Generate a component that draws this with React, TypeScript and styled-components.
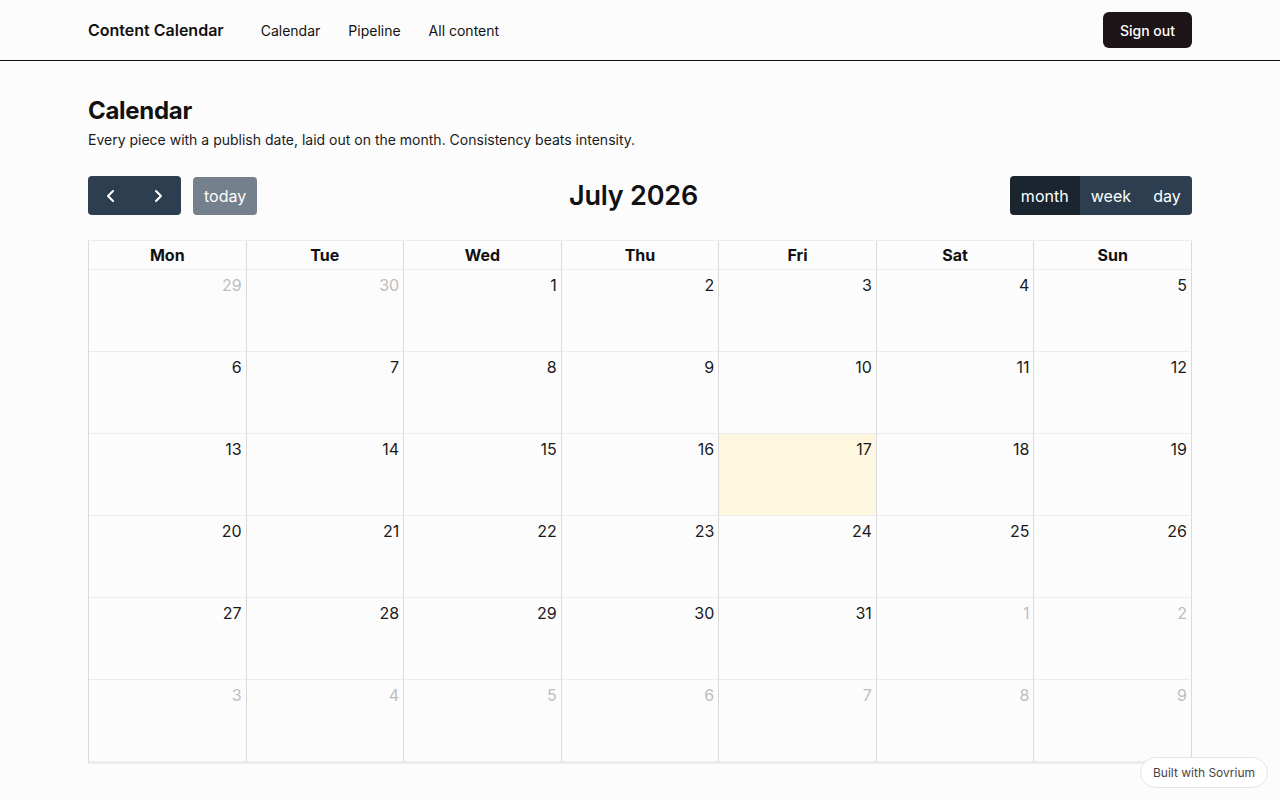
import styled, { createGlobalStyle } from "styled-components";

const GlobalStyle = createGlobalStyle`
  * { box-sizing: border-box; }
  body {
    margin: 0;
    background: #fdfcfd;
    color: #111;
    font-family: Inter, "Noto Sans", sans-serif;
  }
`;

const Header = styled.header`
  height: 61px;
  border-bottom: 1px solid #111;
`;

const HeaderInner = styled.div`
  max-width: 1104px;
  height: 100%;
  margin: 0 auto;
  display: flex;
  align-items: center;
`;

const Brand = styled.div`
  font-size: 16px;
  font-weight: 600;
  margin-right: 37px;
`;

const Nav = styled.nav`
  display: flex;
  gap: 28px;
  flex: 1;
`;

const NavLink = styled.a`
  font-size: 14px;
  font-weight: 420;
  color: #111;
  text-decoration: none;
`;

const SignOut = styled.button`
  height: 36px;
  width: 89px;
  border: none;
  border-radius: 6px;
  background: #1c1416;
  color: #fff;
  font-family: inherit;
  font-size: 14px;
  font-weight: 450;
`;

const Main = styled.main`
  max-width: 1104px;
  margin: 0 auto;
  padding-top: 35px;
`;

const Title = styled.h1`
  margin: 0;
  font-size: 24px;
  font-weight: 700;
  letter-spacing: -0.3px;
  line-height: 30px;
`;

const Lead = styled.p`
  margin: 4px 0 0;
  font-size: 14px;
  line-height: 20px;
  color: #1a1a1a;
`;

const Toolbar = styled.div`
  margin-top: 26px;
  display: flex;
  align-items: center;
  justify-content: space-between;
  height: 39px;
`;

const ToolGroup = styled.div`
  display: flex;
  align-items: center;
  gap: 12px;
`;

const ButtonGroup = styled.div`
  display: flex;
  border-radius: 4px;
  overflow: hidden;
`;

const FcButton = styled.button<{ $active?: boolean; $faded?: boolean; $w?: number }>`
  height: 39px;
  min-width: ${(p) => (p.$w ? `${p.$w}px` : "auto")};
  padding: 0 11px;
  border: none;
  background: ${(p) => (p.$active ? "#1a252f" : "#2c3e50")};
  opacity: ${(p) => (p.$faded ? 0.65 : 1)};
  color: #fff;
  font-family: inherit;
  font-size: 16px;
  display: flex;
  align-items: center;
  justify-content: center;
`;

const TodayButton = styled(FcButton)`
  border-radius: 4px;
  height: 38px;
`;

const MonthTitle = styled.h2`
  margin: 0;
  font-size: 27px;
  font-weight: 600;
  letter-spacing: -0.2px;
`;

const Grid = styled.div`
  margin-top: 25px;
  display: grid;
  grid-template-columns: repeat(7, 1fr);
  border-top: 1px solid #ececec;
  border-left: 1px solid #dadada;
  border-bottom: 2px solid #ececec;
`;

const DayHead = styled.div`
  height: 29px;
  padding-bottom: 1px;
  border-right: 1px solid #dadada;
  border-bottom: 1px solid #ececec;
  display: flex;
  align-items: center;
  justify-content: center;
  font-size: 16px;
  font-weight: 700;
`;

const Cell = styled.div<{ $today?: boolean }>`
  height: 82px;
  border-right: 1px solid #dadada;
  border-bottom: 1px solid #ececec;
  background: ${(p) => (p.$today ? "#fef7e0" : "transparent")};
  padding: 4px 4px 0 0;
  text-align: right;
`;

const DayNum = styled.span<{ $other?: boolean }>`
  font-size: 16px;
  line-height: 22px;
  color: ${(p) => (p.$other ? "#bdbdbd" : "#1a1a1a")};
`;

const Badge = styled.div`
  position: fixed;
  right: 12px;
  bottom: 12px;
  height: 31px;
  padding: 0 12px;
  border: 1px solid #e8e2e3;
  border-radius: 16px;
  background: #fff;
  color: #4a4446;
  font-size: 12px;
  display: flex;
  align-items: center;
`;

const Chevron = ({ dir }: { dir: "left" | "right" }) => (
  <svg width="16" height="16" viewBox="0 0 16 16" fill="none">
    <path
      d={dir === "left" ? "M10 3 L5 8 L10 13" : "M6 3 L11 8 L6 13"}
      stroke="#fff"
      strokeWidth="2"
      strokeLinecap="round"
      strokeLinejoin="round"
    />
  </svg>
);

const WEEKDAYS = ["Mon", "Tue", "Wed", "Thu", "Fri", "Sat", "Sun"];

// six weeks starting on the Monday before July 1, 2026
const buildDays = () => {
  const start = new Date(2026, 5, 29);
  return Array.from({ length: 42 }, (_, i) => {
    const d = new Date(start);
    d.setDate(start.getDate() + i);
    return { date: d.getDate(), other: d.getMonth() !== 6, today: d.getMonth() === 6 && d.getDate() === 17 };
  });
};

export default function App() {
  const days = buildDays();
  return (
    <>
      <GlobalStyle />
      <Header>
        <HeaderInner>
          <Brand>Content Calendar</Brand>
          <Nav>
            <NavLink href="#">Calendar</NavLink>
            <NavLink href="#">Pipeline</NavLink>
            <NavLink href="#">All content</NavLink>
          </Nav>
          <SignOut>Sign out</SignOut>
        </HeaderInner>
      </Header>
      <Main>
        <Title>Calendar</Title>
        <Lead>Every piece with a publish date, laid out on the month. Consistency beats intensity.</Lead>
        <Toolbar>
          <ToolGroup>
            <ButtonGroup>
              <FcButton $w={46}>
                <Chevron dir="left" />
              </FcButton>
              <FcButton $w={47}>
                <Chevron dir="right" />
              </FcButton>
            </ButtonGroup>
            <TodayButton $faded>today</TodayButton>
          </ToolGroup>
          <MonthTitle>July 2026</MonthTitle>
          <ToolGroup>
            <ButtonGroup>
              <FcButton $active $w={70}>month</FcButton>
              <FcButton $w={62}>week</FcButton>
              <FcButton $w={50}>day</FcButton>
            </ButtonGroup>
          </ToolGroup>
        </Toolbar>
        <Grid>
          {WEEKDAYS.map((w) => (
            <DayHead key={w}>{w}</DayHead>
          ))}
          {days.map((d, i) => (
            <Cell key={i} $today={d.today}>
              <DayNum $other={d.other}>{d.date}</DayNum>
            </Cell>
          ))}
        </Grid>
      </Main>
      <Badge>Built with Sovrium</Badge>
    </>
  );
}
